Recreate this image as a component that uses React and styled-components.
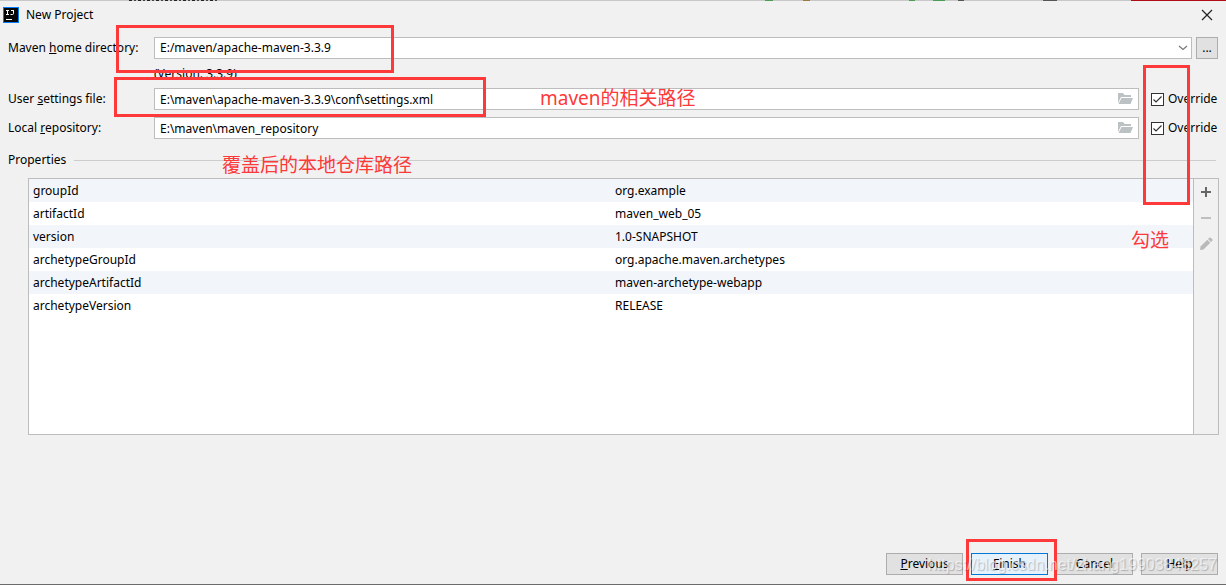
/**
 *
 * NewProject
 *
 */

import React from 'react';
import styled, { createGlobalStyle, css } from 'styled-components';

const GlobalStyle = createGlobalStyle`
  * {
    box-sizing: border-box;
  }

  body {
    margin: 0;
    background: #f1f1f1;
    color: #000;
    font: 12px/16px 'Noto Sans', 'Noto Sans CJK SC', sans-serif;
  }

  input,
  select,
  button {
    font: inherit;
    color: inherit;
  }
`;

const Window = styled.div`
  position: relative;
  display: flex;
  flex-direction: column;
  min-height: 100vh;
  border-bottom: 1px solid #6b6b6b;
  overflow: hidden;
`;

const Backdrop = styled.div`
  display: flex;
  justify-content: space-between;
  height: 1px;
  background: #c8c8c8;
`;

const BackdropText = styled.span`
  width: 90px;
  margin-left: 129px;
  background: repeating-linear-gradient(
    90deg,
    #222 0 3px,
    #c8c8c8 3px 5px,
    #444 5px 7px,
    #c8c8c8 7px 9px
  );
`;

const BackdropIcons = styled.span`
  width: 366px;
  margin-left: auto;
  background: linear-gradient(
    90deg,
    #499c54 0 8px,
    transparent 8px 38px,
    #9a7b3c 38px 45px,
    transparent 45px 144px,
    #499c54 144px 150px,
    transparent 150px 168px,
    #499c54 168px 180px,
    transparent 180px 193px,
    #555 193px 199px,
    transparent 199px 278px,
    #555 278px 292px,
    transparent 292px
  );
`;

const BackdropAccent = styled.span`
  width: 95px;
  background: #b00d18;
`;

const TitleBar = styled.header`
  display: flex;
  align-items: center;
  gap: 7px;
  height: 28px;
  padding: 0 12px 0 3px;
`;

const Title = styled.h1`
  flex: 1;
  margin: 0;
  font-size: 12px;
  font-weight: 400;
`;

const IconButton = styled.button`
  display: flex;
  align-items: center;
  justify-content: center;
  padding: 0;
  border: 0;
  background: none;
`;

const Form = styled.form`
  display: flex;
  flex: 1;
  flex-direction: column;
  padding: 8px 8px 9px;
`;

const Row = styled.div`
  display: flex;
  align-items: center;
  height: 22px;
  margin-bottom: 7px;
`;

const Label = styled.label`
  flex: none;
  width: 146px;
  white-space: nowrap;
`;

const Control = styled.div`
  position: relative;
  display: flex;
  flex: 1;
  height: 22px;
`;

const fieldStyle = css`
  width: 100%;
  height: 22px;
  padding: 0 5px;
  border: 1px solid #bdbdbd;
  border-radius: 0;
  background: #fff;
`;

const Input = styled.input`
  ${fieldStyle};
`;

const Select = styled.select`
  ${fieldStyle};
  appearance: none;
`;

const FieldIcon = styled.span`
  position: absolute;
  top: 0;
  right: ${props => props.$right}px;
  display: flex;
  align-items: center;
  height: 22px;
  pointer-events: none;
`;

const Version = styled.div`
  height: 22px;
  padding: 0 0 0 146px;
`;

const Override = styled.label`
  display: flex;
  flex: none;
  align-items: center;
  gap: 4px;
  width: 67px;
  margin-left: 12px;
  white-space: nowrap;
`;

const Checkbox = styled.input`
  flex: none;
  width: 13px;
  height: 13px;
  margin: 0;
  appearance: none;
  border: 1px solid #333;
  background: #fff;

  &:checked {
    background: #fff
      url("data:image/svg+xml,%3Csvg xmlns='http://www.w3.org/2000/svg' viewBox='0 0 11 11'%3E%3Cpath d='M1.5 5.5 4 8l5.5-5.5' fill='none' stroke='%23333' stroke-width='1.2'/%3E%3C/svg%3E");
  }
`;

const Button = styled.button`
  width: ${props => (props.$small ? '22px' : '77px')};
  height: 22px;
  margin-left: ${props => (props.$small ? '4px' : '0')};
  padding: 0;
  border: 1px solid ${props => (props.$primary ? '#0078d7' : '#adadad')};
  background: ${props => (props.$primary ? '#e5f1fb' : '#e1e1e1')};
`;

const Separator = styled.h2`
  display: flex;
  align-items: center;
  gap: 8px;
  height: 16px;
  margin: 6px 2px 10px 0;
  font-size: 12px;
  font-weight: 400;

  &::after {
    content: '';
    flex: 1;
    height: 1px;
    background: #cdcdcd;
  }
`;

const Panel = styled.section`
  display: flex;
  min-height: 257px;
  margin: 0 -1px 0 20px;
  border: 1px solid #bdbdbd;
`;

const TableArea = styled.div`
  flex: 1;
  background: #fff;
`;

const Table = styled.table`
  width: 100%;
  table-layout: fixed;
  border-collapse: collapse;
`;

const TableRow = styled.tr`
  height: 23px;

  &:nth-child(odd) {
    background: #f2f5fa;
  }
`;

const Cell = styled.td`
  padding: 0 4px;
`;

const Tools = styled.div`
  display: flex;
  flex-direction: column;
  gap: 10px;
  width: 25px;
  padding-top: 5px;
  border-left: 1px solid #bdbdbd;

  button {
    width: 24px;
    height: 16px;
  }
`;

const Footer = styled.footer`
  display: flex;
  justify-content: flex-end;
  gap: 8px;
  margin-top: auto;
  padding-top: 16px;
`;

const Highlight = styled.div`
  position: absolute;
  top: ${props => props.$top};
  bottom: ${props => props.$bottom};
  left: ${props => props.$left};
  right: ${props => props.$right};
  width: ${props => props.$width};
  height: ${props => props.$height};
  border: 3px solid #fd3939;
  pointer-events: none;
`;

const Note = styled.p`
  position: absolute;
  top: ${props => props.$top};
  left: ${props => props.$left};
  right: ${props => props.$right};
  margin: 0;
  color: #fd3939;
  font-size: 19px;
  line-height: 24px;
  white-space: nowrap;
  pointer-events: none;
`;

const Watermark = styled.p`
  position: absolute;
  right: 9px;
  bottom: 9px;
  margin: 0;
  color: rgba(255, 255, 255, 0.6);
  font-family: 'Liberation Sans', sans-serif;
  font-size: 16px;
  line-height: 20px;
  text-shadow: 1px 1px 1px rgba(0, 0, 0, 0.22);
  white-space: nowrap;
  pointer-events: none;
`;

const Logo = () => (
  <svg width="16" height="16" viewBox="0 0 16 16">
    <rect width="16" height="16" fill="#087cfa" />
    <rect x="1" y="1" width="14" height="14" fill="#070707" />
    <path
      d="M3 3.5h3M4.5 3.5v4M3 7.5h3M8 3.5h3M10.5 3v3.5q0 1-1 1H7.5M3 12.5h6"
      fill="none"
      stroke="#fff"
    />
  </svg>
);

const CloseIcon = () => (
  <svg width="14" height="14" viewBox="0 0 14 14">
    <path d="m2 2 10 10M12 2 2 12" stroke="#222" strokeWidth="1.2" />
  </svg>
);

const ChevronIcon = () => (
  <svg width="10" height="6" viewBox="0 0 10 6">
    <path d="m1 1 4 3.5L9 1" fill="none" stroke="#777" strokeWidth="1.2" />
  </svg>
);

const FolderIcon = () => (
  <svg width="15" height="12" viewBox="0 0 15 12" fill="#bcc1c4">
    <path d="M0 0h5l1.5 2H13v2H3L0 10z" />
    <path d="M3.5 5H15l-2.5 6H0.5z" />
  </svg>
);

const AddIcon = () => (
  <svg width="12" height="12" viewBox="0 0 12 12">
    <path d="M1 6h10M6 1v10" stroke="#666" strokeWidth="2" />
  </svg>
);

const RemoveIcon = () => (
  <svg width="12" height="12" viewBox="0 0 12 12">
    <path d="M1 6h10" stroke="#bfbfbf" strokeWidth="2" />
  </svg>
);

const EditIcon = () => (
  <svg width="14" height="14" viewBox="0 0 14 14" fill="#b9b9b9">
    <path d="m1 13 .5-3.5L8.3 2.7l3 3L4.5 12.5z" />
    <path d="m9 2 1.3-1.3q.7-.5 1.4 0l1.6 1.6q.5.7 0 1.4L12 5z" />
  </svg>
);

const properties = [
  ['groupId', 'org.example'],
  ['artifactId', 'maven_web_05'],
  ['version', '1.0-SNAPSHOT'],
  ['archetypeGroupId', 'org.apache.maven.archetypes'],
  ['archetypeArtifactId', 'maven-archetype-webapp'],
  ['archetypeVersion', 'RELEASE'],
];

const PathField = ({ id, label, value }) => (
  <Row>
    <Label htmlFor={id}>{label}</Label>
    <Control>
      <Input id={id} type="text" defaultValue={value} />
      <FieldIcon $right={6}>
        <FolderIcon />
      </FieldIcon>
    </Control>
    <Override>
      <Checkbox type="checkbox" defaultChecked />
      Override
    </Override>
  </Row>
);

export default class NewProject extends React.Component {
  onSubmit = e => {
    e.preventDefault();
  };

  render() {
    return (
      <Window>
        <GlobalStyle />
        <Backdrop>
          <BackdropText />
          <BackdropIcons />
          <BackdropAccent />
        </Backdrop>
        <TitleBar>
          <Logo />
          <Title>New Project</Title>
          <IconButton type="button" aria-label="Close">
            <CloseIcon />
          </IconButton>
        </TitleBar>
        <Form onSubmit={this.onSubmit}>
          <Row>
            <Label htmlFor="home">
              Maven <u>h</u>ome directory:
            </Label>
            <Control>
              <Select id="home">
                <option>E:/maven/apache-maven-3.3.9</option>
              </Select>
              <FieldIcon $right={4}>
                <ChevronIcon />
              </FieldIcon>
            </Control>
            <Button $small type="button">
              ...
            </Button>
          </Row>
          <Version>(Version: 3.3.9)</Version>
          <PathField
            id="settings"
            label={
              <>
                User <u>s</u>ettings file:
              </>
            }
            value="E:\maven\apache-maven-3.3.9\conf\settings.xml"
          />
          <PathField
            id="repository"
            label={
              <>
                Local <u>r</u>epository:
              </>
            }
            value="E:\maven\maven_repository"
          />
          <Separator>Properties</Separator>
          <Panel>
            <TableArea>
              <Table>
                <tbody>
                  {properties.map(([name, value]) => (
                    <TableRow key={name}>
                      <Cell>{name}</Cell>
                      <Cell>{value}</Cell>
                    </TableRow>
                  ))}
                </tbody>
              </Table>
            </TableArea>
            <Tools>
              <IconButton type="button" aria-label="Add">
                <AddIcon />
              </IconButton>
              <IconButton type="button" aria-label="Remove" disabled>
                <RemoveIcon />
              </IconButton>
              <IconButton type="button" aria-label="Edit" disabled>
                <EditIcon />
              </IconButton>
            </Tools>
          </Panel>
          <Footer>
            <Button type="button">
              <u>P</u>revious
            </Button>
            <Button $primary>
              <u>F</u>inish
            </Button>
            <Button type="button">Cancel</Button>
            <Button type="button">Help</Button>
          </Footer>
        </Form>
        <Highlight $top="25px" $left="116px" $width="278px" $height="48px" />
        <Highlight $top="77px" $left="114px" $width="372px" $height="40px" />
        <Highlight $top="65px" $right="36px" $width="47px" $height="140px" />
        <Highlight $bottom="3px" $right="169px" $width="91px" $height="42px" />
        <Note $top="86px" $left="540px">
          maven的相关路径
        </Note>
        <Note $top="153px" $left="222px">
          覆盖后的本地仓库路径
        </Note>
        <Note $top="228px" $right="57px">
          勾选
        </Note>
        <Watermark>https://blog.csdn.net/zhang19903848257</Watermark>
      </Window>
    );
  }
}
